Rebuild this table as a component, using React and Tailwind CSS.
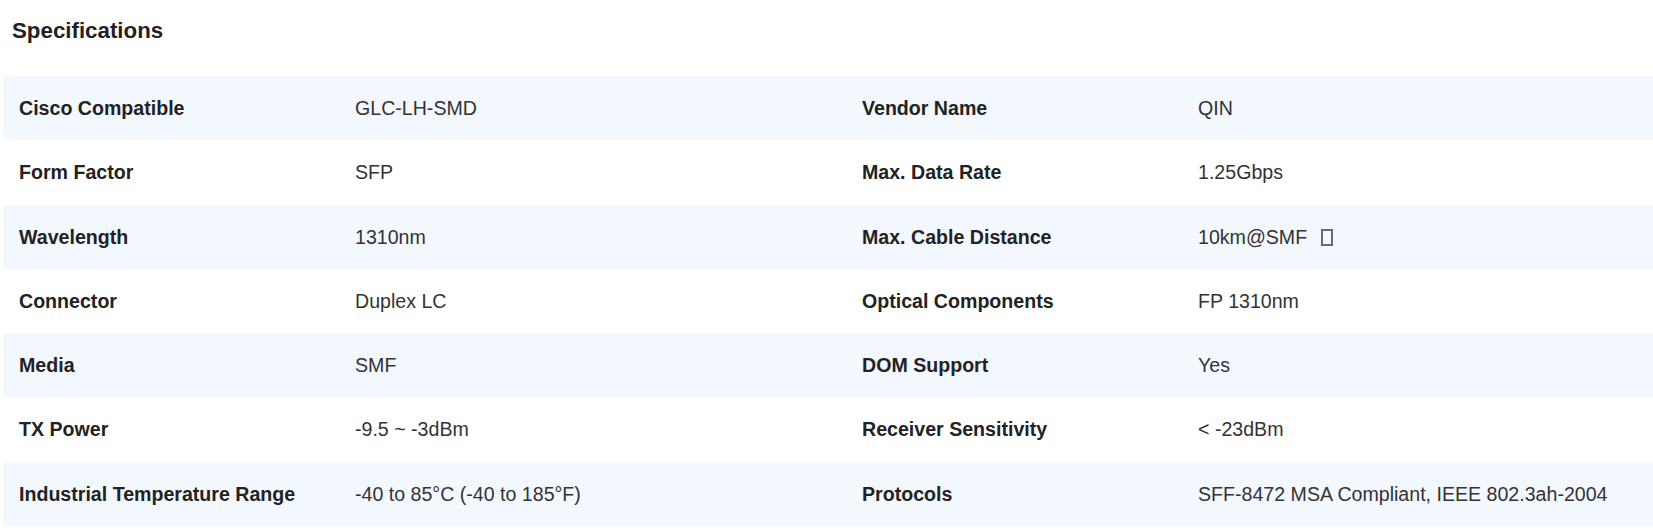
import React from "react";

const rows = [
  ["Cisco Compatible", "GLC-LH-SMD", "Vendor Name", "QIN"],
  ["Form Factor", "SFP", "Max. Data Rate", "1.25Gbps"],
  ["Wavelength", "1310nm", "Max. Cable Distance", "10km@SMF"],
  ["Connector", "Duplex LC", "Optical Components", "FP 1310nm"],
  ["Media", "SMF", "DOM Support", "Yes"],
  ["TX Power", "-9.5 ~ -3dBm", "Receiver Sensitivity", "< -23dBm"],
  ["Industrial Temperature Range", "-40 to 85°C (-40 to 185°F)", "Protocols", "SFF-8472 MSA Compliant, IEEE 802.3ah-2004"],
];

export default function App() {
  return (
    <div
      className="w-[1653px] h-[528px] bg-white overflow-hidden"
      style={{ fontFamily: '"Liberation Sans", Arial, sans-serif' }}
    >
      <h2 className="pl-[12px] pt-[18px] h-[76px] text-[22.3px] font-bold text-[#222] leading-[1.15]">
        Specifications
      </h2>
      <div className="pl-[3px]">
        {rows.map((r, i) => (
          <div
            key={i}
            className={`grid grid-cols-[336px_507px_336px_1fr] h-[64.3px] pt-[1px] items-center text-[19.6px] ${
              i % 2 === 0 ? "bg-[#f3f7fe]" : "bg-white"
            }`}
          >
            <div className="px-[16px] font-bold text-[#222] whitespace-nowrap">{r[0]}</div>
            <div className="px-[16px] text-[#333] whitespace-nowrap">{r[1]}</div>
            <div className="px-[16px] font-bold text-[#222] whitespace-nowrap">{r[2]}</div>
            <div className="px-[16px] text-[#333] whitespace-nowrap flex items-center">
              <span>{r[3]}</span>
              {i === 2 && (
                <span className="inline-block ml-[14px] w-[12px] h-[17px] border-2 border-[#6b6b6b]" />
              )}
            </div>
          </div>
        ))}
      </div>
    </div>
  );
}
